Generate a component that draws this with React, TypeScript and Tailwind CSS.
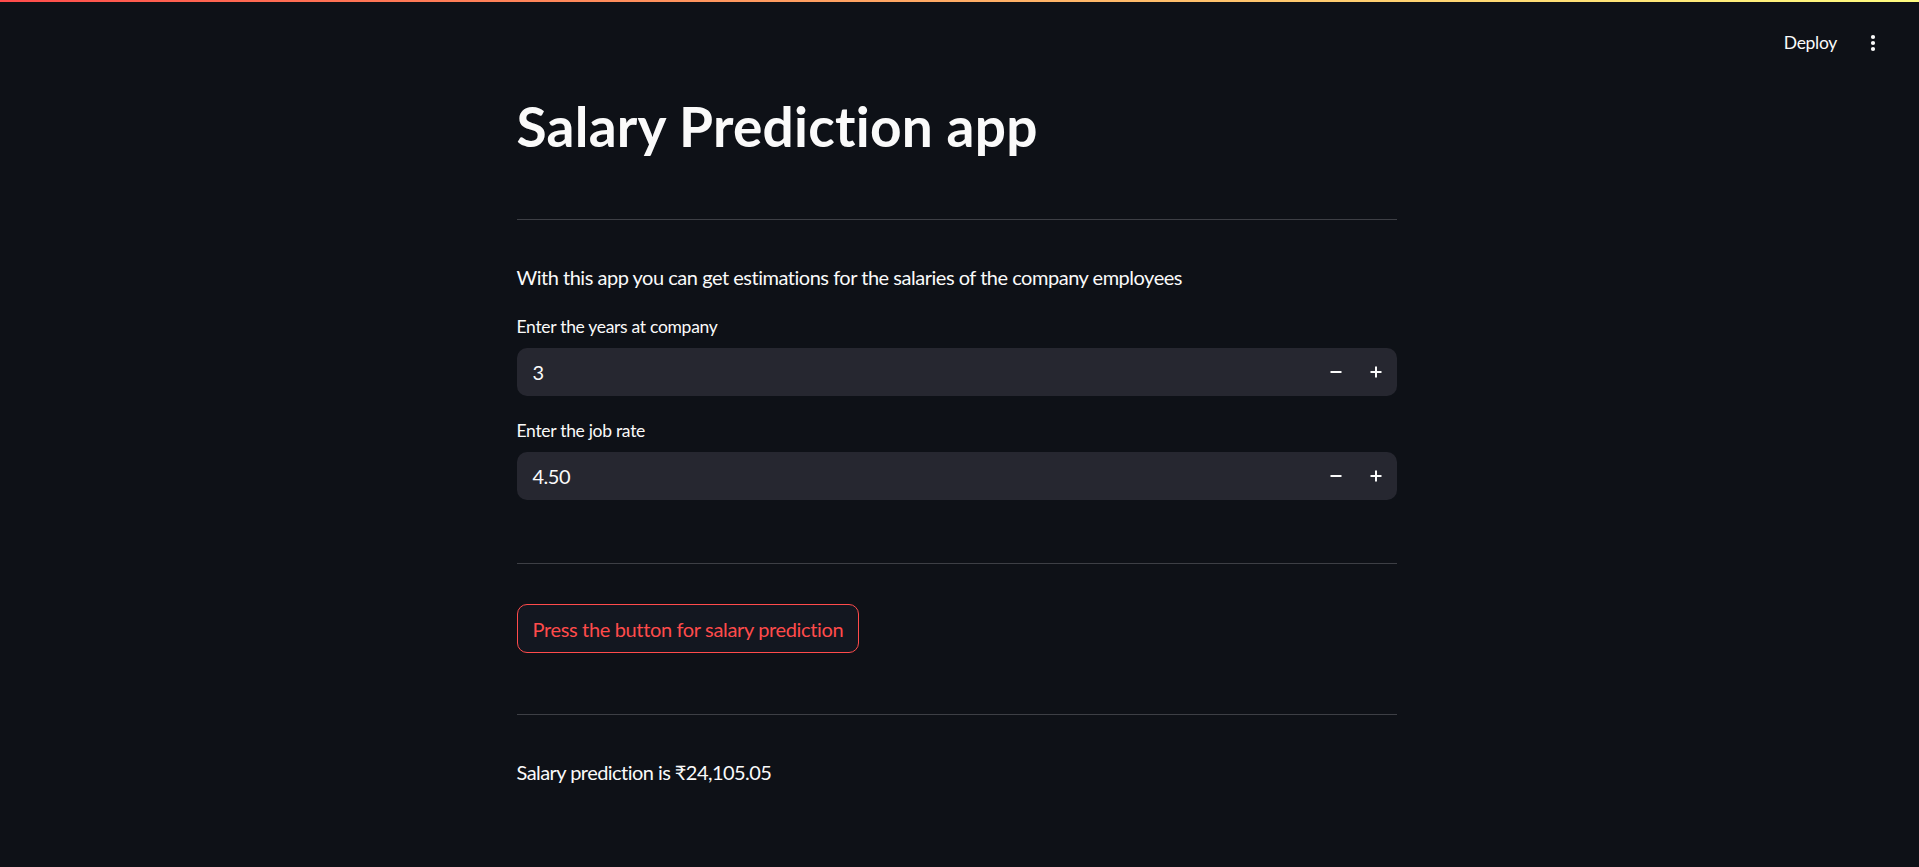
import React from "react";

function Stepper({ value }: { value: string }) {
  return (
    <div className="flex h-[48px] w-full items-center rounded-[10px] bg-[#262730]">
      <span className="flex-1 pl-[16px] text-[20px] leading-[48px] tracking-[-0.5px] text-[#fafafa]">{value}</span>
      <button className="flex h-[48px] w-[40px] items-center justify-center" aria-label="decrement">
        <svg width="12" height="12" viewBox="0 0 12 12">
          <rect x="0.5" y="5" width="11" height="2" fill="#fafafa" />
        </svg>
      </button>
      <button className="mr-[1px] flex h-[48px] w-[40px] items-center justify-center" aria-label="increment">
        <svg width="12" height="12" viewBox="0 0 12 12">
          <rect x="0.5" y="5" width="11" height="2" fill="#fafafa" />
          <rect x="5" y="0.5" width="2" height="11" fill="#fafafa" />
        </svg>
      </button>
    </div>
  );
}

export default function App() {
  return (
    <div
      className="min-h-screen bg-[#0e1117] text-[#fafafa]"
      style={{ fontFamily: "Lato, 'Noto Sans', sans-serif" }}
    >
      <div className="h-[2px] bg-gradient-to-r from-[#ff4b4b] to-[#fffd80]" />
      <header className="flex h-[82px] items-center justify-end pr-[34px]">
        <span className="text-[17.5px] leading-[22px] tracking-[-0.3px] text-[#fafafa]">Deploy</span>
        <span className="ml-[24px] flex h-[24px] w-[24px] items-center justify-center">
          <svg width="6" height="18" viewBox="0 0 6 18">
            <circle cx="3" cy="3" r="2.1" fill="#fafafa" />
            <circle cx="3" cy="9" r="2.1" fill="#fafafa" />
            <circle cx="3" cy="15" r="2.1" fill="#fafafa" />
          </svg>
        </span>
      </header>
      <div className="flex justify-center pr-[6px]">
        <main className="flex w-[880px] flex-col">
          <h1 className="mt-[9px] text-[55px] font-bold leading-[66px] tracking-[0.25px]">Salary Prediction app</h1>
          <hr className="mt-[60px] border-0 border-t border-[#3d3f45]" />
          <p className="mt-[42px] text-[20px] leading-[30px] tracking-[-0.48px]">
            With this app you can get estimations for the salaries of the company employees
          </p>
          <label className="mt-[24px] text-[17.5px] leading-[22px] tracking-[-0.3px]">Enter the years at company</label>
          <div className="mt-[10px]">
            <Stepper value="3" />
          </div>
          <label className="mt-[24px] text-[17.5px] leading-[22px] tracking-[-0.3px]">Enter the job rate</label>
          <div className="mt-[10px]">
            <Stepper value="4.50" />
          </div>
          <hr className="mt-[63px] border-0 border-t border-[#3d3f45]" />
          <div className="mt-[40px]">
            <button className="h-[49px] rounded-[10px] border border-[#ff4b4b] bg-[#131720] px-[15px] text-[20px] tracking-[-0.35px] text-[#ff4b4b]">
              Press the button for salary prediction
            </button>
          </div>
          <hr className="mt-[61px] border-0 border-t border-[#3d3f45]" />
          <p className="mt-[42px] text-[20px] leading-[30px] tracking-[-0.55px]">Salary prediction is ₹24,105.05</p>
        </main>
      </div>
    </div>
  );
}
